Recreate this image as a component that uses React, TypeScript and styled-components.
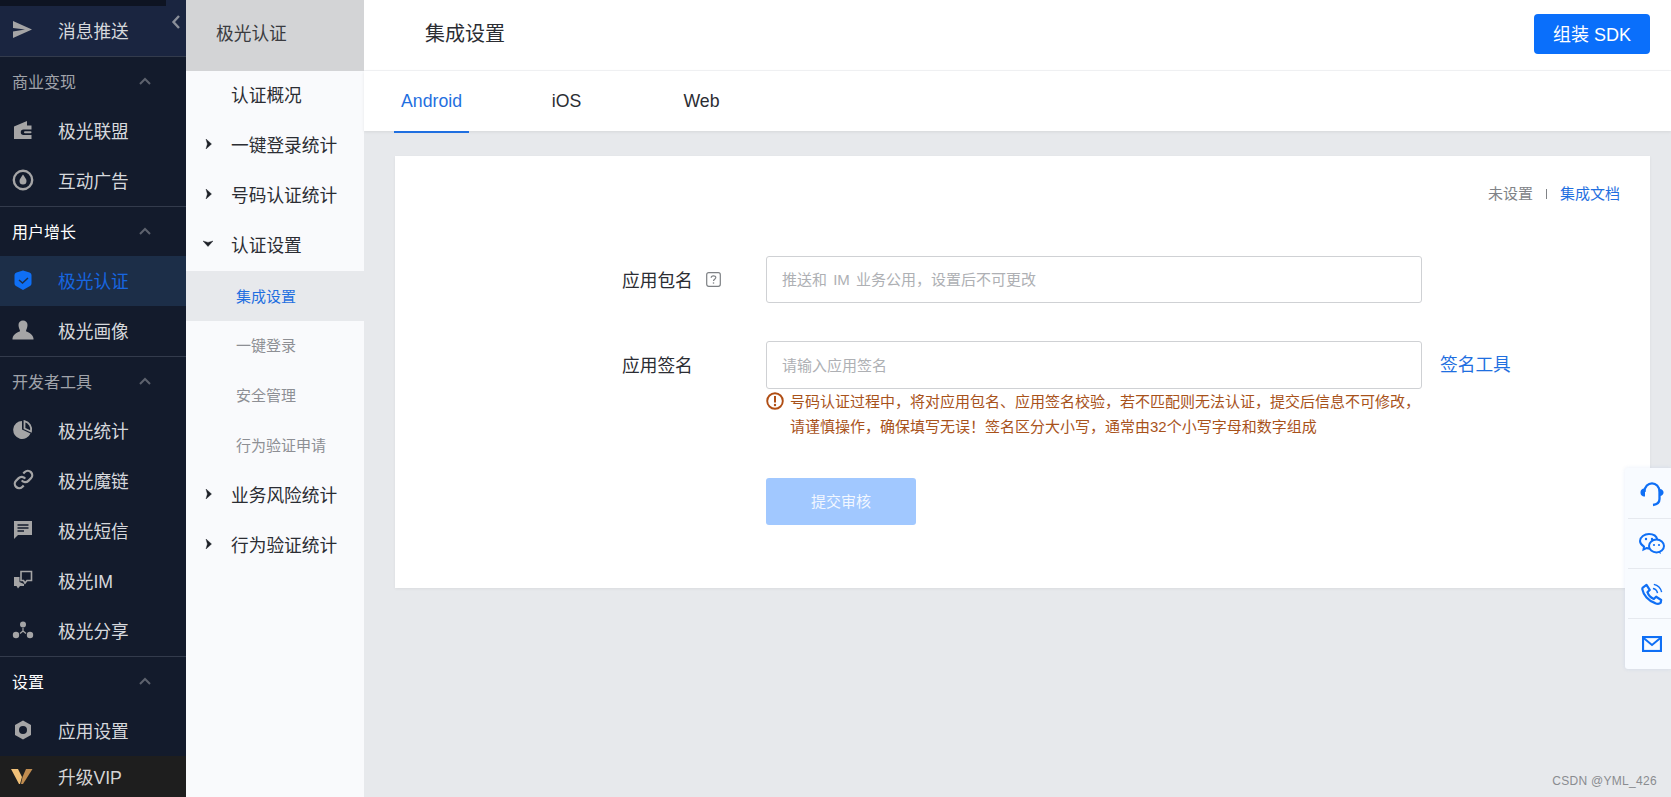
import React from 'react';
import styled, { createGlobalStyle } from 'styled-components';

const CJK = `"Liberation Sans", "Noto Sans CJK SC", sans-serif`;

const GlobalStyle = createGlobalStyle`
    html, body {
        margin: 0;
        padding: 0;
        height: 100%;
        overflow: hidden;
        background: #e7e9ec;
    }
    * {
        box-sizing: border-box;
    }
    body {
        font-family: ${CJK};
        color: #2b2d33;
    }
`;

const Page = styled.div`
    position: relative;
    display: flex;
    width: 1671px;
    height: 797px;
    overflow: hidden;
`;

/* left dark menu */
const Sidebar = styled.aside`
    position: relative;
    width: 186px;
    flex: none;
    height: 100%;
    background: #131b2c;
    overflow: hidden;
`;

const TopStrip = styled.div`
    height: 6px;
    width: 166px;
    background: #0e1422;
`;

const PushBlock = styled.div`
    background: #1a2540;
`;

const Divider = styled.div`
    height: 1px;
    background: #333b4c;
`;

const Collapse = styled.span`
    position: absolute;
    left: 171px;
    top: 14px;
    display: flex;
    color: #8a8f99;
`;

const SectionTitle = styled.div<{ $bright?: boolean }>`
    height: 49px;
    display: flex;
    align-items: center;
    justify-content: space-between;
    padding: 0 35px 2px 12px;
    font-size: 16px;
    color: ${(p) => (p.$bright ? '#ffffff' : '#a0a3aa')};
`;

const SideRow = styled.div<{ $active?: boolean; $vip?: boolean }>`
    height: ${(p) => (p.$vip ? '41px' : '50px')};
    display: flex;
    align-items: center;
    padding-left: 12px;
    padding-bottom: ${(p) => (p.$vip ? '1px' : '3px')};
    font-size: 17.7px;
    color: ${(p) => (p.$active ? '#1766e0' : p.$vip ? '#d5d5d5' : '#d6d8dc')};
    background: ${(p) => (p.$active ? '#1c2e48' : p.$vip ? '#1e1e1e' : 'transparent')};
`;

const SideIcon = styled.span`
    width: 46px;
    flex: none;
    display: flex;
    align-items: center;
`;

/* second menu */
const SubMenu = styled.nav`
    width: 178px;
    flex: none;
    height: 100%;
    background: #f9fafc;
`;

const SubHead = styled.div`
    height: 71px;
    display: flex;
    align-items: center;
    padding-left: 30px;
    padding-bottom: 7px;
    font-size: 17.7px;
    background: #d3d4d6;
    color: #3a3b3f;
`;

const SubRow = styled.div`
    height: 50px;
    display: flex;
    align-items: center;
    padding-left: 45px;
    padding-bottom: 5px;
    font-size: 17.7px;
    color: #2b2d33;
`;

const Caret = styled.span`
    width: 20px;
    margin-left: -33px;
    margin-right: 13px;
    display: flex;
    justify-content: center;
    color: #1c1f26;
`;

const SubLeaf = styled.div<{ $active?: boolean }>`
    height: 50px;
    display: flex;
    align-items: center;
    padding-left: 50px;
    padding-bottom: ${(p) => (p.$active ? '2px' : '4px')};
    font-size: 15px;
    color: ${(p) => (p.$active ? '#1f6fe0' : '#8d8f94')};
    background: ${(p) => (p.$active ? '#e7e9ec' : 'transparent')};
`;

/* main area */
const Main = styled.main`
    flex: 1;
    min-width: 0;
    display: flex;
    flex-direction: column;
`;

const TopBar = styled.header`
    height: 71px;
    display: flex;
    align-items: center;
    justify-content: space-between;
    padding: 0 21px 5px 61px;
    background: #fff;
    border-bottom: 1px solid #f2f3f5;
`;

const PageTitle = styled.h1`
    margin: 0;
    font-size: 20px;
    font-weight: 400;
    color: #2b2d33;
`;

const SdkButton = styled.button`
    width: 116px;
    height: 40px;
    padding: 0 0 3px;
    border: 0;
    border-radius: 4px;
    background: #0a6ffb;
    color: #fff;
    font-family: inherit;
    font-size: 18px;
    margin-top: 3px;
`;

const Tabs = styled.div`
    height: 60px;
    display: flex;
    gap: 60px;
    padding-left: 30px;
    background: #fff;
    box-shadow: 0 1px 3px rgba(0, 0, 0, 0.08);
`;

const Tab = styled.div<{ $active?: boolean }>`
    width: 75px;
    height: 62px;
    display: flex;
    align-items: center;
    justify-content: center;
    font-size: 17.7px;
    color: ${(p) => (p.$active ? '#1f6fe0' : '#2b2d33')};
    border-bottom: 2px solid ${(p) => (p.$active ? '#1f6fe0' : 'transparent')};
`;

const Card = styled.section`
    margin: 25px 21px 0 31px;
    height: 432px;
    padding: 28px 30px 0 227px;
    background: #fff;
    box-shadow: 0 1px 3px rgba(0, 0, 0, 0.06);
`;

const StatusLine = styled.div`
    height: 20px;
    display: flex;
    justify-content: flex-end;
    align-items: center;
    font-size: 15px;
    line-height: 20px;
    color: #808387;
    margin-bottom: 52px;
`;

const Sep = styled.span`
    width: 1px;
    height: 10px;
    margin: 0 13px;
    background: #808387;
`;

const DocLink = styled.a`
    color: #1f6fe0;
`;

const FieldRow = styled.div`
    display: flex;
    align-items: flex-start;
    margin-bottom: 38px;
`;

const Label = styled.label`
    width: 144px;
    flex: none;
    display: flex;
    align-items: center;
    height: 47px;
    padding-bottom: 2px;
    font-size: 17.7px;
    color: #2b2d33;
`;

const Help = styled.span`
    display: flex;
    margin-left: 13px;
    margin-top: 2px;
    color: #7d8084;
`;

const Input = styled.input<{ $tall?: boolean }>`
    display: block;
    width: 656px;
    height: ${(p) => (p.$tall ? '48px' : '47px')};
    padding: 0 15px;
    border: 1px solid #cfd1d4;
    border-radius: 3px;
    outline: none;
    font-family: inherit;
    font-size: 15px;
    word-spacing: 2px;
    &::placeholder {
        color: #aeb0b4;
        opacity: 1;
    }
`;

const ToolLink = styled.a`
    margin: 1px 0 0 18px;
    line-height: 47px;
    font-size: 17.7px;
    color: #1f6fe0;
`;

const SecondField = styled(FieldRow)`
    margin-bottom: 0;
`;

const Warning = styled.div`
    display: flex;
    width: 656px;
    margin-left: 144px;
    font-size: 15px;
    line-height: 25px;
    color: #a8521a;
`;

const WarnIcon = styled.span`
    flex: none;
    width: 24px;
    padding-top: 3px;
    display: flex;
    align-items: flex-start;
    color: #b04e14;
`;

const Submit = styled.button`
    display: block;
    width: 150px;
    height: 47px;
    margin: 39px 0 0 144px;
    padding: 0 0 2px;
    border: 0;
    border-radius: 3px;
    background: #a1c8ff;
    color: #f2f7ff;
    font-family: inherit;
    font-size: 15px;
`;

/* floating help bar */
const FloatBar = styled.div`
    position: absolute;
    right: 0;
    top: 468px;
    width: 46px;
    height: 201px;
    padding: 1px 0 0 3px;
    background: #f8fbff;
    border-radius: 3px 0 0 3px;
    box-shadow: 0 0 4px rgba(30, 90, 200, 0.1);
`;

const FloatItem = styled.div<{ $last?: boolean }>`
    height: 50px;
    display: flex;
    align-items: center;
    justify-content: center;
    padding-left: 5px;
    color: #0f6ff5;
    border-bottom: ${(p) => (p.$last ? '0' : '1px solid #e6e9ef')};
`;

const Watermark = styled.div`
    position: absolute;
    right: 14px;
    bottom: 8px;
    font-size: 12px;
    line-height: 16px;
    letter-spacing: 0.3px;
    color: #8a8c90;
`;

const gray = '#a5a5a6';

const Chevron = () => (
    <svg width="12" height="8" viewBox="0 0 12 8">
        <path d="M1 7 L6 2 L11 7" fill="none" stroke="#5d626d" strokeWidth="2" />
    </svg>
);

const CaretRight = () => (
    <svg width="7" height="10" viewBox="0 0 7 10">
        <path d="M1 0 L6.5 5 L1 10 L2.4 5 Z" fill="currentColor" stroke="currentColor" strokeWidth="0.4" />
    </svg>
);

const CaretDown = () => (
    <svg width="10" height="7" viewBox="0 0 10 7">
        <path d="M0 1 L5 6.5 L10 1 L5 2.4 Z" fill="currentColor" stroke="currentColor" strokeWidth="0.4" />
    </svg>
);

const IconSend = () => (
    <svg width="19" height="17" viewBox="0 0 19 17" style={{ marginLeft: 1 }}>
        <path d="M0 0 L19 8.5 L0 17 L0 10.5 L12 8.5 L0 7 Z" fill={gray} />
    </svg>
);

const IconWallet = () => (
    <svg width="18" height="18" viewBox="0 0 18 18" style={{ marginLeft: 2 }}>
        <path d="M0 5.5 L13 0 L13 4.5 L17.5 4.5 L17.5 8.5 L9.5 8.5 A2.7 2.7 0 0 0 9.5 14 L17.5 14 L17.5 18 L0 18 Z" fill={gray} />
        <rect x="10" y="10.2" width="7.5" height="2" rx="1" fill={gray} />
    </svg>
);

const IconTarget = () => (
    <svg width="22" height="22" viewBox="0 0 22 22">
        <circle cx="11" cy="11" r="9.2" fill="none" stroke={gray} strokeWidth="2.4" />
        <path d="M11 5.5 C13 8.5 14.5 10 14.5 12 A3.5 3.5 0 0 1 7.5 12 C7.5 10 9 8.5 11 5.5 Z" fill={gray} />
    </svg>
);

const IconShield = () => (
    <svg width="18" height="20" viewBox="0 0 18 20" style={{ marginLeft: 2 }}>
        <path d="M9 0.5 L15.5 2.5 Q17.5 3 17.5 5 L17.5 13.5 Q17.5 15 16 16 L9 20 L2 16 Q0.5 15 0.5 13.5 L0.5 5 Q0.5 3 2.5 2.5 Z" fill="#0f6ff5" />
        <path d="M5 10 L8.5 13 L14 8" fill="none" stroke="#1c2e48" strokeWidth="1.5" />
    </svg>
);

const IconUser = () => (
    <svg width="22" height="20" viewBox="0 0 22 20">
        <path d="M6.5 5 C6.5 2 8.5 0.5 11 0.5 C13.5 0.5 15.5 2 15.5 5 C15.5 8 14 10 14 11 C14 12 21 13 21.5 18.5 L21.5 19.5 L0.5 19.5 L0.5 18.5 C1 13 8 12 8 11 C8 10 6.5 8 6.5 5 Z" fill={gray} />
    </svg>
);

const IconPie = () => (
    <svg width="20" height="20" viewBox="0 0 20 20" style={{ marginLeft: 1 }}>
        <path d="M9 1 A9 9 0 1 0 17.5 13.5 L9 9.5 Z" fill={gray} />
        <path d="M11.5 1.2 A8.5 8.5 0 0 1 18 11.5 L11.5 8.5 Z" fill="none" stroke={gray} strokeWidth="1.8" />
    </svg>
);

const IconLink = () => (
    <svg width="21" height="21" viewBox="0 0 24 24" style={{ marginLeft: 1 }}>
        <g fill="none" stroke={gray} strokeWidth="2.6">
            <path d="M10 13a5 5 0 0 0 7.54.54l3-3a5 5 0 0 0-7.07-7.07l-1.72 1.71" />
            <path d="M14 11a5 5 0 0 0-7.54-.54l-3 3a5 5 0 0 0 7.07 7.07l1.71-1.71" />
        </g>
    </svg>
);

const IconMessage = () => (
    <svg width="20" height="19" viewBox="0 0 20 19" style={{ marginLeft: 1 }}>
        <path d="M1 1 L19 1 L19 15 L5 15 L1 19 Z" fill={gray} />
        <path d="M4.5 5 L15.5 5 M4.5 8 L15.5 8 M4.5 11 L11 11" stroke="#131b2c" strokeWidth="1.3" />
    </svg>
);

const IconChat = () => (
    <svg width="20" height="19" viewBox="0 0 20 19" style={{ marginLeft: 1 }}>
        <path d="M8 1.5 L18.5 1.5 L18.5 10.5 L14 10.5 L12 13 L10.5 10.5 L8 10.5 Z" fill="none" stroke={gray} strokeWidth="1.6" />
        <path d="M1 7 L6.5 7 L6.5 12 L11 14 L11 16 L7 16 L5 18.5 L3.5 16 L1 16 Z" fill={gray} />
    </svg>
);

const IconShare = () => (
    <svg width="22" height="18" viewBox="0 0 22 18">
        <circle cx="11" cy="3.5" r="3" fill={gray} />
        <circle cx="4" cy="14" r="3.2" fill={gray} />
        <circle cx="18" cy="14" r="3.2" fill={gray} />
        <path d="M11 7 L11 10 M11 10 L8 12.5 M11 10 L14 12.5" stroke={gray} strokeWidth="1.2" />
    </svg>
);

const IconHex = () => (
    <svg width="18" height="20" viewBox="0 0 18 20" style={{ marginLeft: 2 }}>
        <path fillRule="evenodd" d="M9 0.5 L17 5 L17 15 L9 19.5 L1 15 L1 5 Z M9 6 A4 4 0 1 0 9 14 A4 4 0 1 0 9 6 Z" fill={gray} />
    </svg>
);

const IconVip = () => (
    <svg width="22" height="16" viewBox="0 0 22 16" style={{ marginLeft: -1 }}>
        <path d="M0 1 L7 1 L11 9 L9 16 L8 16 Z" fill="#f0c078" />
        <path d="M21.5 1 L15 1 L11.5 9 L10 16 L12 16 Z" fill="#c08c50" />
    </svg>
);

const IconHelp = () => (
    <svg width="15" height="15" viewBox="0 0 15 15">
        <rect x="0.7" y="0.7" width="13.6" height="13.6" rx="2" fill="none" stroke="currentColor" strokeWidth="1.2" />
        <path d="M5.2 5.8 C5.2 3.2 9.8 3.2 9.8 5.6 C9.8 7.2 7.5 7.2 7.5 9" fill="none" stroke="currentColor" strokeWidth="1.2" />
        <circle cx="7.5" cy="11" r="0.8" fill="currentColor" />
    </svg>
);

const IconWarn = () => (
    <svg width="18" height="18" viewBox="0 0 18 18">
        <circle cx="9" cy="9" r="7.8" fill="none" stroke="currentColor" strokeWidth="1.9" />
        <path d="M9 4 L9 10.5" stroke="currentColor" strokeWidth="2" />
        <circle cx="9" cy="13" r="1.2" fill="currentColor" />
    </svg>
);

const IconHeadset = () => (
    <svg width="24" height="26" viewBox="0 0 24 26">
        <path d="M4.5 11 C4.5 -0.5 19.5 -0.5 19.5 11 L19.5 18 C19.5 21.5 17 23.5 13 24" fill="none" stroke="currentColor" strokeWidth="2.3" />
        <path d="M5 7.5 L5 15.5 C1.5 15.5 0.5 13.5 0.5 11.5 C0.5 9.5 1.5 7.5 5 7.5 Z" fill="currentColor" />
        <path d="M19.5 8 L19.5 15 C22.5 15 23.5 13 23.5 11.5 C23.5 10 22.5 8 19.5 8 Z" fill="currentColor" />
    </svg>
);

const IconWechat = () => (
    <svg width="26" height="22" viewBox="0 0 26 22">
        <path d="M10.5 15.5 C9.5 15.5 8.5 15.3 7.5 15 L4.5 16.5 L5 13.6 C2.5 12 1 10 1 8 C1 4 5.5 1 10 1 C14 1 17.5 3 18.3 6.5" fill="none" stroke="currentColor" strokeWidth="2" />
        <ellipse cx="17.5" cy="13" rx="7.5" ry="6.4" fill="none" stroke="currentColor" strokeWidth="2" />
        <path d="M21 18.3 L22 21 L18.5 19.3" fill="currentColor" />
        <circle cx="7" cy="6" r="1.2" fill="currentColor" />
        <circle cx="13" cy="6" r="1.2" fill="currentColor" />
        <circle cx="15" cy="12" r="1.1" fill="currentColor" />
        <circle cx="20" cy="12" r="1.1" fill="currentColor" />
    </svg>
);

const IconPhone = () => (
    <svg width="22" height="22" viewBox="0 0 24 24">
        <path d="M2 5 L6 2 L9.5 7.5 L7 10 C8 13 10.5 16 14 17.5 L16.5 15 L22 18.5 L21.5 21.5 C20.5 22.5 18 23 15.5 22 C8 19.5 2.5 13 1.5 7 C1.3 6 1.5 5.5 2 5 Z" fill="none" stroke="currentColor" strokeWidth="2.4" strokeLinejoin="round" />
        <path d="M13 6 C16 6.5 17.5 8 18 11 M14 1.5 C18.5 2.5 21.5 5.5 22.5 10" fill="none" stroke="currentColor" strokeWidth="1.6" />
    </svg>
);

const IconMail = () => (
    <svg width="20" height="16" viewBox="0 0 20 16">
        <rect x="1" y="1" width="18" height="14" fill="none" stroke="currentColor" strokeWidth="2.2" />
        <path d="M1 1.5 L10 9 L19 1.5" fill="none" stroke="currentColor" strokeWidth="2" />
    </svg>
);

export default function App() {
    return (
        <Page>
            <GlobalStyle />
            <Sidebar>
                <Collapse>
                    <svg width="10" height="16" viewBox="0 0 10 16">
                        <path d="M8 2 L2.5 8 L8 14" fill="none" stroke="currentColor" strokeWidth="2.4" />
                    </svg>
                </Collapse>
                <PushBlock>
                    <TopStrip />
                    <SideRow>
                        <SideIcon><IconSend /></SideIcon>消息推送
                    </SideRow>
                </PushBlock>
                <Divider />
                <SectionTitle>商业变现<Chevron /></SectionTitle>
                <SideRow><SideIcon><IconWallet /></SideIcon>极光联盟</SideRow>
                <SideRow><SideIcon><IconTarget /></SideIcon>互动广告</SideRow>
                <Divider />
                <SectionTitle $bright>用户增长<Chevron /></SectionTitle>
                <SideRow $active><SideIcon><IconShield /></SideIcon>极光认证</SideRow>
                <SideRow><SideIcon><IconUser /></SideIcon>极光画像</SideRow>
                <Divider />
                <SectionTitle>开发者工具<Chevron /></SectionTitle>
                <SideRow><SideIcon><IconPie /></SideIcon>极光统计</SideRow>
                <SideRow><SideIcon><IconLink /></SideIcon>极光魔链</SideRow>
                <SideRow><SideIcon><IconMessage /></SideIcon>极光短信</SideRow>
                <SideRow><SideIcon><IconChat /></SideIcon>极光IM</SideRow>
                <SideRow><SideIcon><IconShare /></SideIcon>极光分享</SideRow>
                <Divider />
                <SectionTitle $bright>设置<Chevron /></SectionTitle>
                <SideRow><SideIcon><IconHex /></SideIcon>应用设置</SideRow>
                <SideRow $vip><SideIcon><IconVip /></SideIcon>升级VIP</SideRow>
            </Sidebar>

            <SubMenu>
                <SubHead>极光认证</SubHead>
                <SubRow>认证概况</SubRow>
                <SubRow><Caret><CaretRight /></Caret>一键登录统计</SubRow>
                <SubRow><Caret><CaretRight /></Caret>号码认证统计</SubRow>
                <SubRow><Caret><CaretDown /></Caret>认证设置</SubRow>
                <SubLeaf $active>集成设置</SubLeaf>
                <SubLeaf>一键登录</SubLeaf>
                <SubLeaf>安全管理</SubLeaf>
                <SubLeaf>行为验证申请</SubLeaf>
                <SubRow><Caret><CaretRight /></Caret>业务风险统计</SubRow>
                <SubRow><Caret><CaretRight /></Caret>行为验证统计</SubRow>
            </SubMenu>

            <Main>
                <TopBar>
                    <PageTitle>集成设置</PageTitle>
                    <SdkButton>组装 SDK</SdkButton>
                </TopBar>
                <Tabs>
                    <Tab $active>Android</Tab>
                    <Tab>iOS</Tab>
                    <Tab>Web</Tab>
                </Tabs>
                <Card>
                    <StatusLine>
                        未设置<Sep /><DocLink>集成文档</DocLink>
                    </StatusLine>
                    <FieldRow>
                        <Label>应用包名<Help><IconHelp /></Help></Label>
                        <Input placeholder="推送和 IM 业务公用，设置后不可更改" />
                    </FieldRow>
                    <SecondField>
                        <Label>应用签名</Label>
                        <Input $tall placeholder="请输入应用签名" />
                        <ToolLink>签名工具</ToolLink>
                    </SecondField>
                    <Warning>
                        <WarnIcon><IconWarn /></WarnIcon>
                        <div>
                            号码认证过程中，将对应用包名、应用签名校验，若不匹配则无法认证，提交后信息不可修改，请谨慎操作，确保填写无误！签名区分大小写，通常由32个小写字母和数字组成
                        </div>
                    </Warning>
                    <Submit>提交审核</Submit>
                </Card>
            </Main>

            <FloatBar>
                <FloatItem><IconHeadset /></FloatItem>
                <FloatItem><IconWechat /></FloatItem>
                <FloatItem><IconPhone /></FloatItem>
                <FloatItem $last><IconMail /></FloatItem>
            </FloatBar>
            <Watermark>CSDN @YML_426</Watermark>
        </Page>
    );
}
